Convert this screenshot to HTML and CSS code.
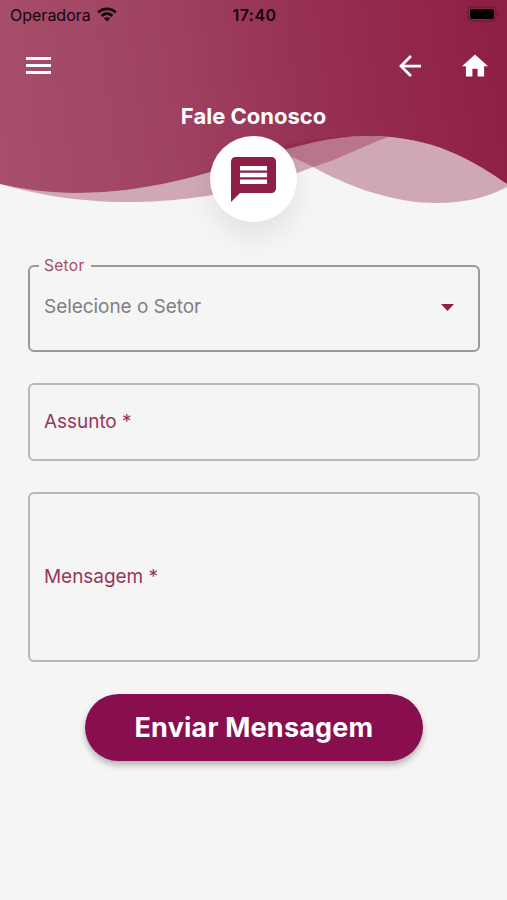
FILE: index.html
```html
<!DOCTYPE html>
<html lang="pt-BR">
<head>
<meta charset="utf-8">
<meta name="viewport" content="width=device-width, initial-scale=1">
<title>Fale Conosco</title>
<link rel="stylesheet" href="styles.css">
</head>
<body>
<header class="hero">
  <svg class="waves" viewBox="0 0 507 210" aria-hidden="true">
    <defs>
      <linearGradient id="wine" gradientUnits="userSpaceOnUse" x1="0" y1="130" x2="500" y2="60">
        <stop offset="0" stop-color="#a64e6a"/>
        <stop offset=".35" stop-color="#9f4261"/>
        <stop offset=".58" stop-color="#983355"/>
        <stop offset="1" stop-color="#8e1f45"/>
      </linearGradient>
    </defs>
    <path fill="url(#wine)" d="M0 0H507V184C473 161 435 136 366 136C283 136 200 193 75 193C48 193 22 189 0 184Z"/>
    <path class="veil" d="M0 184C22 189 48 193 75 193C200 193 283 136 366 136C374 136 381 136.500 388 137C364 146 337 160 313 167C276 182 210 202 126 202C78 202 34 194 0 184Z"/>
    <path class="veil" d="M270 150C300 139 332 136 366 136C435 136 473 161 507 184V187C486 198 463 203 437 203C389 203 344 184 313 167C296 158 282 153 270 150Z"/>
  </svg>
  <div class="status">
    <span class="carrier">Operadora
      <svg class="wifi" viewBox="0 0 20 15" aria-hidden="true"><path d="M1.300 5.500C6.300.6 13.700.6 18.700 5.500M4.600 8.900C8 6 12 6 15.400 8.900" fill="none" stroke="#16050b" stroke-width="2.900"/><path d="M6.900 11.300C8.700 9.800 11.300 9.800 13.100 11.300L10 14.500Z" fill="#16050b"/></svg>
    </span>
    <time class="clock">17:40</time>
    <svg class="battery" viewBox="0 0 33 16" aria-hidden="true"><rect x="1" y="1" width="28" height="14" rx="4" fill="none" stroke="#651832"/><rect x="3" y="3" width="24" height="10" rx="2"/><path d="M31 6Q33 8 31 10Z" fill="#651832"/></svg>
  </div>
  <nav class="toolbar">
    <svg class="icon menu" viewBox="0 0 25 17"><path d="M0 0H25V3H0ZM0 7H25V10H0ZM0 14H25V17H0Z"/></svg>
    <svg class="icon back" viewBox="4 4 16 16"><path d="M20 11H7.830l5.590-5.590L12 4l-8 8 8 8 1.410-1.410L7.830 13H20v-2z"/></svg>
    <svg class="icon home" viewBox="2 3 20 17"><path d="M10 20v-6h4v6h5v-8h3L12 3 2 12h3v8z"/></svg>
  </nav>
  <h1 class="title">Fale Conosco</h1>
  <div class="badge"><svg class="chat" viewBox="2 2 20 20"><path d="M20 2H4c-1.100 0-1.990.9-1.990 2L2 22l4-4h14c1.100 0 2-.9 2-2V4c0-1.100-.9-2-2-2zM6 6h12v2H6zm0 3h12v2H6zm0 3h12v2H6z"/></svg></div>
</header>
<main class="form">
  <fieldset class="field sector">
    <legend>Setor</legend>
    <div class="select"><span>Selecione o Setor</span>
    <svg class="caret" viewBox="0 0 13 7"><path d="M0 0H13L6.500 7Z"/></svg></div>
  </fieldset>
  <div class="field subject">Assunto *</div>
  <div class="field message">Mensagem *</div>
  <button class="send" type="button">Enviar Mensagem</button>
</main>
</body>
</html>
```
FILE: styles.css
```css
* { box-sizing: border-box; }
body {
  margin: 0;
  min-height: 900px;
  background: #f5f5f5;
  font-family: Inter, "Liberation Sans", sans-serif;
  color: #98365a;
}
svg { display: block; flex: none; }
.hero {
  position: relative;
  height: 265px;
  display: flex;
  flex-direction: column;
  align-items: center;
}
.waves { position: absolute; top: 0; left: 0; width: 507px; height: 210px; }
.veil { fill: #8e1f48; fill-opacity: .36; }
.status, .toolbar, .title, .badge { position: relative; }
.status {
  width: 100%;
  height: 30px;
  padding: 0 8px 0 10px;
  display: grid;
  grid-template-columns: 1fr auto 1fr;
  align-items: center;
  color: #16050b;
  font-size: 16px;
}
.carrier { display: flex; align-items: center; gap: 6px; }
.wifi { width: 20px; height: 15px; margin-top: -2px; }
.clock { font-weight: 600; font-size: 16px; letter-spacing: .45px; }
.battery { width: 33px; height: 16px; justify-self: end; margin-right: -1px; margin-top: -2px; }
.toolbar {
  width: 100%;
  height: 72px;
  padding: 0 19px 1px 26px;
  display: flex;
  align-items: center;
}
.icon { fill: #fff; }
.menu { width: 25px; height: 17px; margin-right: auto; }
.back { width: 22px; height: 22px; margin-right: 41px; }
.home { width: 26px; height: 23px; }
.title {
  margin: 0;
  height: 34px;
  line-height: 29px;
  color: #fff;
  font-size: 22px;
  font-weight: 700;
}
.badge {
  width: 87px;
  height: 86px;
  border-radius: 50%;
  background: #fff;
  box-shadow: 0 14px 28px rgba(0, 0, 0, .08);
  display: grid;
  place-items: center;
}
.chat { width: 45px; height: 45px; fill: #8e1f48; }
.form {
  padding: 0 27px 0 28px;
  display: flex;
  flex-direction: column;
}
.field {
  margin: 0;
  display: flex;
  align-items: center;
  border: 2px solid #b8b8b8;
  border-radius: 6px;
  padding: 0 14px 2px;
  font-size: 19px;
  letter-spacing: -.05px;
}
.sector {
  display: block;
  height: 96px;
  margin-top: -9px;
  padding: 0 24px 0 14px;
  border-color: #999;
  color: #808080;
}
.select {
  height: 62px;
  display: flex;
  align-items: center;
  justify-content: space-between;
}
.select span { margin-top: -2px; }
.sector legend {
  padding: 0 6px 0 5px;
  margin-left: -5px;
  color: #a64c69;
  font-size: 15.5px;
  line-height: 20px;
  letter-spacing: .3px;
}
.caret { width: 13px; height: 7px; fill: #8e1f48; }
.subject { height: 78px; margin-top: 31px; }
.message { height: 170px; margin-top: 31px; padding-bottom: 1px; }
.send {
  align-self: center;
  width: 338px;
  height: 67px;
  margin-top: 32px;
  border: 0;
  border-radius: 34px;
  background: #890e4f;
  color: #fff;
  font: 700 27px Inter, "Liberation Sans", sans-serif;
  letter-spacing: .2px;
  padding: 0;
  box-shadow: 0 4px 6px rgba(0, 0, 0, .27);
}
```
